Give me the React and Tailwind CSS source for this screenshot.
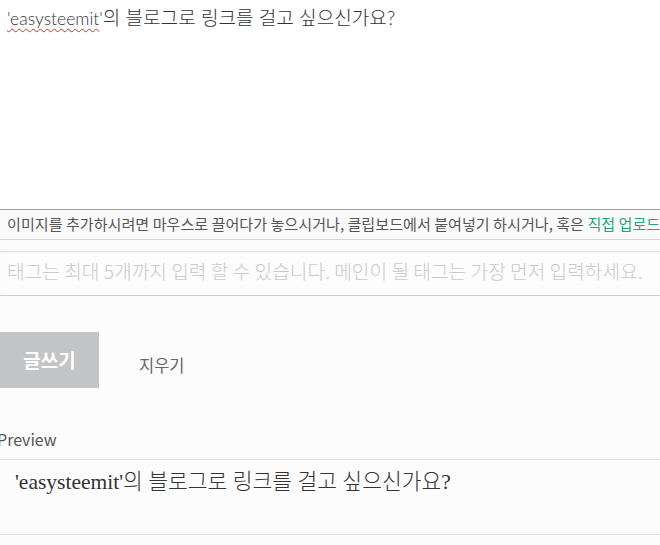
export default function App() {
  const kr = { fontFamily: '"Noto Sans CJK KR", "Noto Sans", sans-serif' };
  return (
    <div className="w-[660px] h-[545px] overflow-hidden bg-[#fcfcfc]" style={kr}>
      {/* 본문 입력 */}
      <div className="h-[209px] bg-white pl-[7px] pt-[2px] text-[19.1px] leading-[30px] text-[#333] font-light">
        <span
          className="text-[17.5px] underline decoration-wavy decoration-[#c0392b] decoration-1 underline-offset-[3px]"
          style={{ fontFamily: 'Lato, sans-serif' }}
        >
          'easysteemit
        </span>
        <span style={{ fontFamily: 'Lato, "Noto Sans CJK KR", sans-serif' }}>
          <span className="text-[17.5px]">'</span>의 블로그로 링크를 걸고 싶으신가요?
        </span>
      </div>

      {/* 드롭존 안내 */}
      <div className="h-[31px] border-t border-b border-t-[#9a9a9a] border-b-[#d4d4d4] bg-[#fafafa] pl-[7px] whitespace-nowrap text-[15.1px] leading-[27px] text-[#555]">
        이미지를 추가하시려면 마우스로 끌어다가 놓으시거나, 클립보드에서 붙여넣기 하시거나, 혹은{' '}
        <span className="text-[#1fa67a]">직접 업로드</span>
      </div>

      {/* 태그 */}
      <div className="mt-[11px] h-[45px] border-t border-b border-t-[#e2e2e2] border-b-[#cfcfcf] bg-[#fdfdfd] pl-[7px] whitespace-nowrap text-[19.2px] leading-[38px] text-[#c9c9c9] font-light shadow-[inset_0_1px_2px_rgba(0,0,0,0.06)]">
        태그는 최대 5개까지 입력 할 수 있습니다. 메인이 될 태그는 가장 먼저 입력하세요.
      </div>

      {/* 버튼 */}
      <div className="mt-[36px] flex items-center">
        <button className="w-[99px] h-[56px] bg-[#c3c4c6] text-white text-[19px] font-bold">글쓰기</button>
        <button className="ml-[40px] mt-[10px] text-[16.5px] text-[#666]">지우기</button>
      </div>

      {/* 미리보기 */}
      <div className="mt-[39px] -ml-[3px] text-[16px] leading-[24px] text-[#555]">Preview</div>
      <div
        className="mt-[8px] h-[76px] border-t border-b border-[#e4e4e4] pl-[15px] pt-[7px] text-[21.5px] leading-[30px] text-[#333] font-light"
        style={{ fontFamily: '"Liberation Serif", "Noto Sans CJK KR", serif' }}
      >
        'easysteemit'의 블로그로 링크를 걸고 싶으신가요?
      </div>
    </div>
  );
}
